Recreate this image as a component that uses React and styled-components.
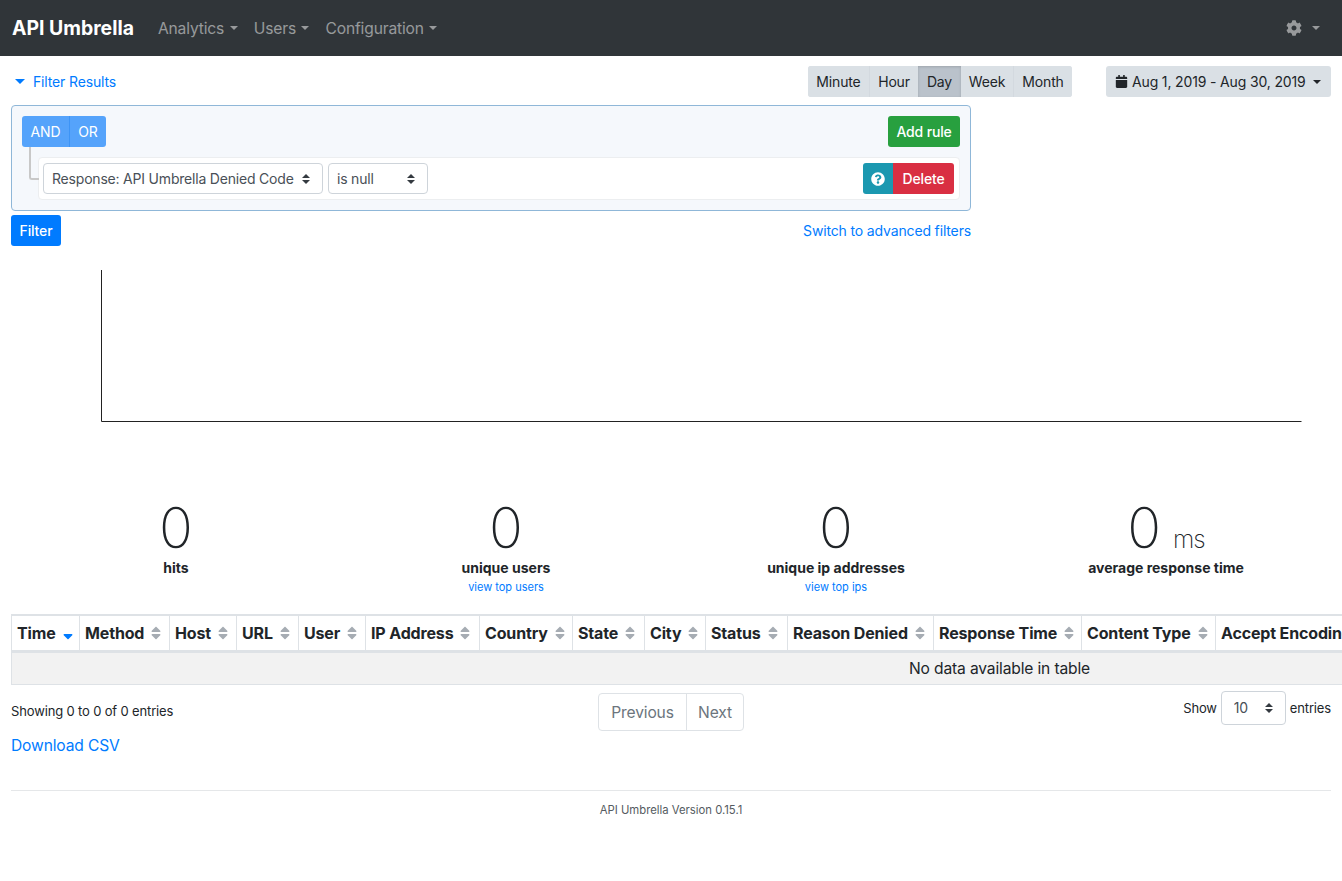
import React from 'react';
import styled, { createGlobalStyle } from 'styled-components';
import { FaCalendar, FaCog, FaQuestionCircle, FaSort, FaSortDown } from 'react-icons/fa';

const arrows = `url("data:image/svg+xml,%3csvg xmlns='http://www.w3.org/2000/svg' viewBox='0 0 4 5'%3e%3cpath fill='%23343a40' d='M2 0L0 2h4zm0 5L0 3h4z'/%3e%3c/svg%3e")`;

const GlobalStyle = createGlobalStyle`
  html, body {
    margin: 0;
    padding: 0;
    background: #fff;
    overflow-x: hidden;
  }
  body {
    font-family: Inter, "Liberation Sans", sans-serif;
    font-size: 14px;
    letter-spacing: -0.15px;
    color: #212529;
  }
  * {
    box-sizing: border-box;
  }
`;

const Navbar = styled.nav`
  height: 56px;
  background: #303539;
  display: flex;
  align-items: center;
  padding: 0 22px 0 12px;
`;

const Brand = styled.a`
  font-size: 19.4px;
  font-weight: 700;
  letter-spacing: 0;
  color: #fff;
  margin-right: 24px;
`;

const NavItem = styled.a`
  display: flex;
  align-items: center;
  font-size: 15.6px;
  color: rgba(255, 255, 255, 0.5);
  margin-right: 16px;
`;

const Caret = styled.span`
  display: inline-block;
  margin-left: ${props => props.$gap || 5.5}px;
  border-top: 4.8px solid ${props => props.$color || 'currentColor'};
  border-left: 4.8px solid transparent;
  border-right: 4.8px solid transparent;
`;

const NavRight = styled(NavItem)`
  margin: 0 0 0 auto;
  svg {
    font-size: 16px;
  }
`;

const Content = styled.main`
  padding: 10px 11px 0;
`;

const TopRow = styled.div`
  display: flex;
  align-items: center;
  height: 31px;
`;

const Toggle = styled.a`
  display: flex;
  align-items: center;
  margin-left: 4px;
  color: #007bff;
  font-size: 14px;
`;

const ToggleCaret = styled(Caret)`
  margin: 0 8px 0 0;
  border-width: 5px 5px 0;
`;

const RangeGroup = styled.div`
  display: flex;
  margin-left: auto;
  height: 31px;
  border-radius: 3px;
  overflow: hidden;
  background: #dae0e5;
`;

const RangeButton = styled.button`
  width: ${props => props.$width}px;
  border: 0;
  padding: 0;
  font: inherit;
  letter-spacing: inherit;
  font-size: 14px;
  color: #212529;
  background: ${props => (props.$active ? '#bac2cb' : '#dae0e5')};
  box-shadow: ${props => (props.$active ? 'inset 0 1px 3px rgba(0, 0, 0, 0.15)' : 'none')};
  border-left: ${props => (props.$divided ? '1px solid #d3d9df' : '0')};
`;

const DateButton = styled.button`
  display: flex;
  align-items: center;
  height: 31px;
  width: 225px;
  margin-left: 34px;
  padding: 0 9px;
  border: 0;
  border-radius: 3px;
  background: #dae0e5;
  font: inherit;
  letter-spacing: inherit;
  font-size: 14px;
  color: #212529;
  svg {
    font-size: 13px;
    margin-right: 4px;
  }
`;

const Builder = styled.section`
  width: 960px;
  height: 106px;
  margin-top: 8px;
  padding: 10px 10px 0;
  background: #f5f8fc;
  border: 1px solid #8fb7d8;
  border-radius: 4px;
`;

const BuilderHead = styled.div`
  display: flex;
  justify-content: space-between;
  height: 31px;
`;

const Group = styled.div`
  display: flex;
  border-radius: 3px;
  overflow: hidden;
`;

const LogicButton = styled.button`
  width: ${props => props.$width}px;
  border: 0;
  padding: 0;
  background: #55a3fb;
  color: #fff;
  font: inherit;
  letter-spacing: inherit;
  font-size: 14px;
  border-left: ${props => (props.$divided ? '1px solid #3d94f6' : '0')};
`;

const ActionButton = styled.button`
  display: flex;
  align-items: center;
  justify-content: center;
  height: 31px;
  width: ${props => props.$width}px;
  border: 0;
  background: ${props => props.$bg};
  color: #fff;
  font: inherit;
  letter-spacing: inherit;
  font-size: 14px;
  font-weight: 500;
  border-radius: ${props => (props.$grouped ? '0' : '3px')};
`;

const RuleRow = styled.div`
  position: relative;
  display: flex;
  align-items: center;
  gap: 5px;
  height: 43px;
  margin: 10px 0 0 16px;
  padding: 0 5px 0 4px;
  background: #fff;
  border: 1px solid #eceef0;
  border-radius: 4px;
`;

const Connector = styled.span`
  position: absolute;
  left: -10px;
  top: -11px;
  width: 10px;
  height: 33px;
  border-left: 2px solid #c8c8c8;
  border-bottom: 2px solid #c8c8c8;
  border-bottom-left-radius: 3px;
`;

const Select = styled.select`
  appearance: none;
  width: ${props => props.$width}px;
  height: ${props => props.$height || 31}px;
  padding: 0 ${props => props.$pad || 8}px;
  background: #fff ${arrows} no-repeat right 12px center / 8px 10px;
  border: 1px solid #ced4da;
  border-radius: 4px;
  font: inherit;
  letter-spacing: -0.2px;
  font-size: 14px;
  color: #495057;
`;

const RuleActions = styled(Group)`
  margin-left: auto;
  svg {
    font-size: 14px;
  }
`;

const FilterRow = styled.div`
  display: flex;
  align-items: center;
  justify-content: space-between;
  width: 960px;
  margin-top: 4px;
`;

const FilterButton = styled(ActionButton)`
  background: #007bff;
`;

const TextLink = styled.a`
  color: #007bff;
  font-size: ${props => props.$size || 14}px;
`;

const ChartFrame = styled.div`
  height: 234px;
  margin-left: -11px;
  svg {
    display: block;
    margin-top: 24px;
  }
`;

const Stats = styled.div`
  display: grid;
  grid-template-columns: repeat(4, 1fr);
  height: 110px;
`;

const Stat = styled.div`
  text-align: center;
  letter-spacing: 0;
`;

const Value = styled.div`
  margin-top: -4px;
  font-size: 56px;
  line-height: 56px;
  font-weight: 200;
`;

const Unit = styled.span`
  font-size: 24.5px;
  line-height: 0;
  letter-spacing: -1px;
  font-weight: 200;
  margin-left: 12px;
  color: #212529;
`;

const Label = styled.div`
  margin-top: 1px;
  font-size: 14px;
  font-weight: 700;
  line-height: 21px;
`;

const StatLink = styled.a`
  display: block;
  margin-top: 1px;
  color: #007bff;
  font-size: 11px;
  line-height: 17px;
`;

const TableClip = styled.div`
  margin-right: -11px;
  overflow: hidden;
`;

const Table = styled.table`
  table-layout: fixed;
  width: 1976px;
  border-collapse: collapse;
  border: 1px solid #dee2e6;
  border-top: 0;
`;

const Th = styled.th`
  width: ${props => props.$width}px;
  height: 36px;
  padding: 0 5px;
  text-align: left;
  white-space: nowrap;
  overflow: hidden;
  font-size: 16px;
  font-weight: 700;
  border: 1px solid #dee2e6;
  border-top-width: 2px;
  border-bottom-width: 3px;
  svg {
    margin-left: 4px;
    vertical-align: -2px;
    font-size: 16px;
    color: ${props => (props.$sorted ? '#007bff' : '#a6acb3')};
  }
`;

const EmptyCell = styled.td`
  height: 33px;
  padding: 0;
  background: #f2f2f2;
  border: 1px solid #dee2e6;
  font-size: 15.6px;
  text-align: center;
`;

const Pager = styled.div`
  display: grid;
  grid-template-columns: 1fr auto 1fr;
  align-items: start;
  margin-top: 8px;
`;

const Info = styled.div`
  padding-top: 10px;
  font-size: 13px;
`;

const PageLinks = styled.div`
  display: flex;
  height: 38px;
  border: 1px solid #dee2e6;
  border-radius: 4px;
`;

const PageLink = styled.a`
  display: flex;
  align-items: center;
  justify-content: center;
  width: ${props => props.$width}px;
  padding-top: 1px;
  font-size: 15.6px;
  color: #6c757d;
  border-left: ${props => (props.$divided ? '1px solid #dee2e6' : '0')};
`;

const Length = styled.div`
  display: flex;
  align-items: center;
  justify-content: flex-end;
  gap: 4px;
  font-size: 13px;
  margin-top: -2px;
`;

const Download = styled.div`
  margin-top: 5px;
`;

const Footer = styled.footer`
  margin-top: 35px;
  padding-top: 12px;
  height: 60px;
  border-top: 1px solid #e5e7e9;
  text-align: center;
  font-size: 11.3px;
  letter-spacing: 0;
  color: #555b61;
`;

const columns = [
  ['Time', 68, true],
  ['Method', 90],
  ['Host', 67],
  ['URL', 62],
  ['User', 67],
  ['IP Address', 114],
  ['Country', 93],
  ['State', 72],
  ['City', 61],
  ['Status', 82],
  ['Reason Denied', 146],
  ['Response Time', 148],
  ['Content Type', 134],
  ['Accept Encoding', 772],
];

const stats = [
  { label: 'hits' },
  { label: 'unique users', link: 'view top users' },
  { label: 'unique ip addresses', link: 'view top ips' },
  { label: 'average response time', unit: 'ms' },
];

export default function App() {
  return (
    <>
      <GlobalStyle />
      <Navbar>
        <Brand>API Umbrella</Brand>
        <NavItem>Analytics<Caret /></NavItem>
        <NavItem>Users<Caret /></NavItem>
        <NavItem>Configuration<Caret /></NavItem>
        <NavRight><FaCog /><Caret $gap={10} /></NavRight>
      </Navbar>
      <Content>
        <TopRow>
          <Toggle><ToggleCaret />Filter Results</Toggle>
          <RangeGroup>
            <RangeButton $width={61}>Minute</RangeButton>
            <RangeButton $width={49} $divided>Hour</RangeButton>
            <RangeButton $width={43} $active>Day</RangeButton>
            <RangeButton $width={52}>Week</RangeButton>
            <RangeButton $width={59} $divided>Month</RangeButton>
          </RangeGroup>
          <DateButton>
            <FaCalendar />Aug 1, 2019 - Aug 30, 2019<Caret $gap={7} />
          </DateButton>
        </TopRow>
        <Builder>
          <BuilderHead>
            <Group>
              <LogicButton $width={47}>AND</LogicButton>
              <LogicButton $width={37} $divided>OR</LogicButton>
            </Group>
            <ActionButton $width={72} $bg="#28a03f">Add rule</ActionButton>
          </BuilderHead>
          <RuleRow>
            <Connector />
            <Select $width={280} defaultValue="denied">
              <option value="denied">Response: API Umbrella Denied Code</option>
            </Select>
            <Select $width={100} defaultValue="null">
              <option value="null">is null</option>
            </Select>
            <RuleActions>
              <ActionButton $grouped $width={30} $bg="#1b98b0"><FaQuestionCircle /></ActionButton>
              <ActionButton $grouped $width={61} $bg="#d92f42">Delete</ActionButton>
            </RuleActions>
          </RuleRow>
        </Builder>
        <FilterRow>
          <FilterButton $width={50} $bg="#007bff">Filter</FilterButton>
          <TextLink>Switch to advanced filters</TextLink>
        </FilterRow>
        <ChartFrame>
          <svg width="1342" height="155" viewBox="0 0 1342 155">
            <path d="M101.5 0V151.5H1301.5" fill="none" stroke="#222" strokeWidth="1" />
          </svg>
        </ChartFrame>
        <Stats>
          {stats.map(stat => (
            <Stat key={stat.label}>
              <Value>0{stat.unit && <Unit>{stat.unit}</Unit>}</Value>
              <Label>{stat.label}</Label>
              {stat.link && <StatLink>{stat.link}</StatLink>}
            </Stat>
          ))}
        </Stats>
        <TableClip>
          <Table>
            <thead>
              <tr>
                {columns.map(([name, width, sorted]) => (
                  <Th key={name} $width={width} $sorted={sorted}>
                    {name}{sorted ? <FaSortDown /> : <FaSort />}
                  </Th>
                ))}
              </tr>
            </thead>
            <tbody>
              <tr>
                <EmptyCell colSpan={columns.length}>No data available in table</EmptyCell>
              </tr>
            </tbody>
          </Table>
        </TableClip>
        <Pager>
          <Info>Showing 0 to 0 of 0 entries</Info>
          <PageLinks>
            <PageLink $width={87}>Previous</PageLink>
            <PageLink $width={57} $divided>Next</PageLink>
          </PageLinks>
          <Length>
            Show
            <Select $width={65} $height={34} $pad={12} defaultValue="10">
              <option value="10">10</option>
            </Select>
            entries
          </Length>
        </Pager>
        <Download>
          <TextLink $size={15.6}>Download CSV</TextLink>
        </Download>
        <Footer>API Umbrella Version 0.15.1</Footer>
      </Content>
    </>
  );
}
